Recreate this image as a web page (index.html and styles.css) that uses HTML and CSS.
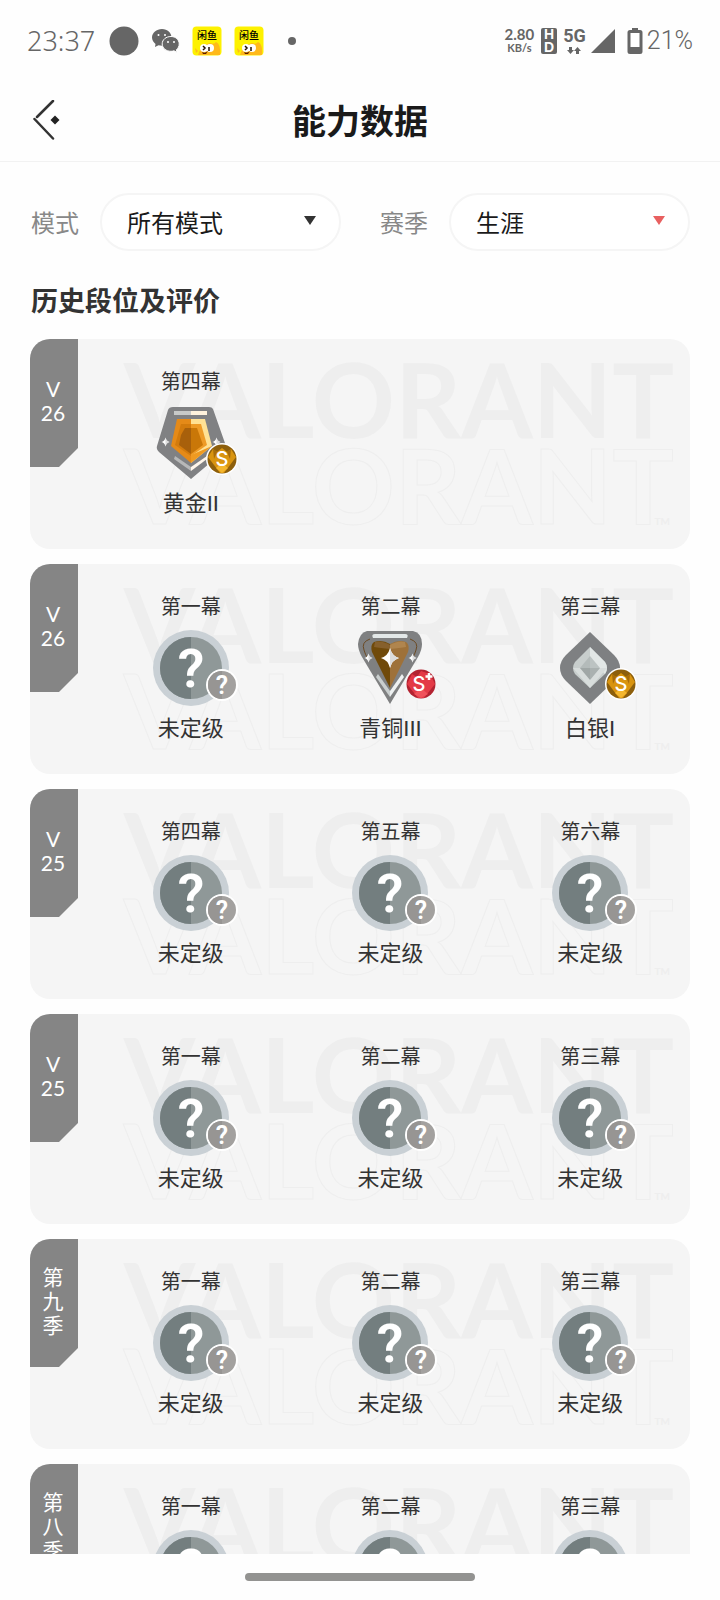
FILE: index.html
```html
<!DOCTYPE html>
<html lang="zh-CN">
<head>
  <meta charset="UTF-8" />
  <meta name="viewport" content="width=device-width, initial-scale=1" />
  <title>能力数据</title>
  <link rel="stylesheet" href="styles.css">
</head>
<body>

  <!-- iconos compartidos -->
  <svg class="defs" aria-hidden="true">
    <symbol id="unranked" viewBox="0 0 76 76" overflow="visible">
      <circle cx="38" cy="38" r="38" fill="#c9d0d5" />
      <circle cx="38" cy="38" r="31" fill="#8f9898" />
      <path d="M38 7a31 31 0 0 0 0 62z" fill="#737e7f" />
      <text class="q" x="38" y="57" font-size="54">?</text>
      <circle cx="69" cy="55" r="16" fill="#fff" />
      <circle cx="69" cy="55" r="14" fill="#a3a19f" />
      <path d="M69 41a14 14 0 0 0 0 28z" fill="#979593" />
      <text class="q" x="69" y="64" font-size="25">?</text>
    </symbol>
    <symbol id="spark" viewBox="-10 -10 20 20">
      <path d="M0-10Q2-2 9 0Q2 2 0 10Q-2 2-9 0Q-2-2 0-10z" fill="#fff" />
      <path d="M0-10Q2-2 9 0Q2 2 0 10z" fill="#dcdcdc" />
    </symbol>
    <symbol id="s-gold" viewBox="0 0 32 32">
      <circle cx="16" cy="16" r="16" fill="#fff" />
      <circle cx="16" cy="16" r="14.500" fill="#8d5f0c" />
      <path d="M2 14L7 6L11 9L16 5L21 9L25 6L30 14L18 30H14z" fill="#d9940f" />
      <path d="M7 6L11 9L8 16zM25 6L21 9L24 16z" fill="#a66c0b" />
      <path d="M16 20L22 25L16 30L10 25z" fill="#f4b62d" />
      <text class="s" x="16" y="23" font-size="20">S</text>
    </symbol>
    <symbol id="s-red" viewBox="0 0 32 32">
      <circle cx="16" cy="16" r="16" fill="#f5f5f5" />
      <circle cx="16" cy="16" r="14.500" fill="#b32331" />
      <path d="M2 16L7 6L12 9L16 3L25 6L30 16L19 30H13z" fill="#e33a46" />
      <path d="M16 20L23 26L16 30L9 26z" fill="#f0525b" />
      <text class="s" x="14" y="23" font-size="20">S</text>
      <path d="M24 5v7M20.500 8.500h7" stroke="#fff" stroke-width="2.500" />
    </symbol>
  </svg>

  <div class="statusbar">
    <span class="time">23:37</span>
    <svg class="st-circle" width="30" height="30" viewBox="0 0 30 30"><circle cx="15" cy="15" r="14.500" fill="#666" /></svg>
    <svg class="st-wechat" width="28" height="24" viewBox="0 0 28 24">
      <path d="M10 0C4.500 0 0 3.800 0 8.500c0 2.600 1.400 4.800 3.500 6.400L3 18l3.500-1.800c1 .3 2.200.5 3.500.5 5.500 0 9.500-3.500 9.500-8.200S15.500 0 10 0z" fill="#666" />
      <path d="M19 7.500c-5 0-8.800 3.200-8.800 7.400s3.800 7.400 8.800 7.400c1.100 0 2-.2 3-.5l3 1.600-.6-2.700c1.800-1.400 2.800-3.500 2.800-5.800 0-4.200-3.600-7.400-8.200-7.400z" fill="#666" stroke="#fff" />
      <g fill="#fff"><circle cx="6.500" cy="6" r="1" /><circle cx="13" cy="6" r="1" /><circle cx="16" cy="13" r="1" /><circle cx="22" cy="13" r="1" /></g>
    </svg>
    <svg class="st-fish" width="30" height="30" viewBox="0 0 30 30">
      <rect x=".5" y=".5" width="29" height="29" rx="4" fill="#fdf100" />
      <path d="M6 29Q9 19 18 17Q22 19 24 16Q29 18 28 29z" fill="#ffb91a" />
      <path d="M3 22l3 3-2 2z" fill="#ffb91a" />
      <circle cx="12" cy="22" r="4" fill="#fff" /><circle cx="18" cy="22" r="4" fill="#fff" />
      <path d="M11 20l2 2-2 2M17 21v4" fill="none" stroke="#221000" stroke-width="1.500" />
      <path d="M10 26q3 2 6-1l-2 3h-3z" fill="#5a1a00" />
      <text x="15" y="13" font-size="10">闲鱼</text>
    </svg>
    <svg class="st-fish" width="30" height="30" viewBox="0 0 30 30">
      <rect x=".5" y=".5" width="29" height="29" rx="4" fill="#fdf100" />
      <path d="M6 29Q9 19 18 17Q22 19 24 16Q29 18 28 29z" fill="#ffb91a" />
      <path d="M3 22l3 3-2 2z" fill="#ffb91a" />
      <circle cx="12" cy="22" r="4" fill="#fff" /><circle cx="18" cy="22" r="4" fill="#fff" />
      <path d="M11 20l2 2-2 2M17 21v4" fill="none" stroke="#221000" stroke-width="1.500" />
      <path d="M10 26q3 2 6-1l-2 3h-3z" fill="#5a1a00" />
      <text x="15" y="13" font-size="10">闲鱼</text>
    </svg>
    <span class="more"></span>

    <span class="speed"><b>2.80</b><small>KB/s</small></span>
    <span class="hd"><b>H</b><b>D</b></span>
    <span class="net">
      <b>5G</b>
      <svg width="14" height="8" viewBox="0 0 14 8"><path d="M2 0h3v3h2L3.500 7L0 3h2zM9 7h3V4h2L10.500 0L7 4h2z" fill="#666" /></svg>
    </span>
    <svg class="st-signal" width="24" height="24" viewBox="0 0 24 24"><path d="M0 24L24 0V24z" fill="#666" /></svg>
    <svg class="st-battery" width="16" height="26" viewBox="0 0 16 26">
      <path d="M5 0h6v3H5z" fill="#666" />
      <rect x="2" y="3.500" width="12" height="21" rx="1" fill="#fff" stroke="#666" stroke-width="3" />
      <path d="M1 19h14v6H1z" fill="#666" />
    </svg>
    <span class="percent">21%</span>
  </div>

  <header class="header">
    <button class="back" type="button" aria-label="返回">
      <svg width="28" height="42" viewBox="0 0 28 42">
        <path d="M21 1L5 17M2.500 19L21 38.500" fill="none" stroke="#333" stroke-width="2.500" stroke-linecap="round" />
        <path d="M23 15.500l4.500 4.500l-4.500 4.500l-4.500-4.500z" fill="#222" />
      </svg>
    </button>
    <h1>能力数据</h1>
  </header>

  <main class="content">
    <form class="filters">
      <label for="modo">模式</label>
      <div class="select">
        <select id="modo"><option>所有模式</option></select>
      </div>
      <label for="temporada">赛季</label>
      <div class="select rojo">
        <select id="temporada"><option>生涯</option></select>
      </div>
    </form>

    <h2>历史段位及评价</h2>

    <section class="card">
      <div class="marca" aria-hidden="true"><span>VALORANT</span><span class="linea">VALORANT</span><i>TM</i></div>
      <div class="tag">V<br>26</div>
      <div class="act">
        <h3>第四幕</h3>
        <!-- oro -->
        <svg class="rank" width="76" height="76" viewBox="0 0 76 76">
          <path d="M20 2H56Q59 2 60 4L73 41Q73 44 70 47L38 74L6 47Q3 44 4 41L15 5Q16 2 20 2z" fill="#808183" />
          <path d="M21 6H38V10H21z" fill="#c7c9c8" /><path d="M38 6H54V10H38z" fill="#fff2dc" />
          <path d="M24 14H38V58L18 41z" fill="#e58a18" /><path d="M38 14H52L59 41L38 58z" fill="#ffe194" />
          <path d="M38 50L59 41L38 58z" fill="#ef9a20" />
          <path d="M28 19H38V51L22 40z" fill="#d37b0d" /><path d="M38 19H48L54 40L38 51z" fill="#ee9b27" />
          <path d="M32 23H38V49L26 40L28 30z" fill="#a8600b" /><path d="M38 23H44L50 40L38 49z" fill="#c97708" />
          <path d="M22 51L38 62V66L21 54z" fill="#b7b8b8" /><path d="M38 62L54 51V54L38 66z" fill="#fff6ea" />
          <use href="#spark" x="8" y="31" width="9" height="12" />
          <use href="#spark" x="59" y="31" width="9" height="12" />
          <use href="#s-gold" x="53" y="38" width="32" height="32" />
        </svg>
        <p>黄金II</p>
      </div>
    </section>

    <section class="card">
      <div class="marca" aria-hidden="true"><span>VALORANT</span><span class="linea">VALORANT</span><i>TM</i></div>
      <div class="tag">V<br>26</div>
      <div class="act">
        <h3>第一幕</h3>
        <svg class="rank" width="76" height="76"><use href="#unranked" width="76" height="76" /></svg>
        <p>未定级</p>
      </div>
      <div class="act">
        <h3>第二幕</h3>
        <!-- bronce -->
        <svg class="rank" width="76" height="76" viewBox="0 0 76 76">
          <path d="M15 1H61Q70 3 70 14Q70 20 66 27L38 74L10 27Q6 20 6 14Q7 3 15 1z" fill="#7f8081" />
          <path d="M18 9Q9 12 12 20Q13 24 16 29M58 9Q67 12 64 20Q63 24 60 29" fill="none" stroke="#6b4a24" />
          <path d="M23 4H53Q57 4 55 8H21Q19 4 23 4z" fill="#e3e8e8" />
          <path d="M38 14Q30 9 22 12Q18 15 20 22L38 58z" fill="#704a0a" />
          <path d="M38 14Q46 9 54 12Q58 15 56 22L38 58z" fill="#9e7139" />
          <path d="M23 12Q30 10 38 15V19Q28 18 22 17z" fill="#86602c" />
          <path d="M53 12Q46 10 38 15V19Q48 18 54 17z" fill="#b0854e" />
          <path d="M26 44L38 61V67L24 47z" fill="#c9cece" /><path d="M50 44L38 61V67L52 47z" fill="#eef1f1" />
          <use href="#spark" x="28" y="18" width="20" height="20" />
          <use href="#spark" x="12" y="22" width="9" height="12" />
          <use href="#spark" x="56" y="22" width="9" height="12" />
          <use href="#s-red" x="53" y="38" width="32" height="32" />
        </svg>
        <p>青铜III</p>
      </div>
      <div class="act">
        <h3>第三幕</h3>
        <!-- plata -->
        <svg class="rank" width="76" height="76" viewBox="0 0 76 76">
          <path d="M38 2L62 25Q68 31 68 38Q68 45 62 51L38 74L14 51Q8 45 8 38Q8 31 14 25z" fill="#7e8082" />
          <path d="M38 17L53 32Q57 38 53 44L38 58L23 44Q19 38 23 32z" fill="#c8cecd" />
          <path d="M38 17L53 32Q57 38 53 44L47 38L38 28z" fill="#e2e7e6" />
          <path d="M21 38L38 58L55 38L48 38L38 49L28 38z" fill="#d8dddc" />
          <path d="M38 26L48 38H38z" fill="#bcc3c2" /><path d="M38 26V38H28z" fill="#b4bbba" />
          <path d="M28 38H38V50z" fill="#a0a7a6" /><path d="M38 38H48L38 50z" fill="#aab1b0" />
          <use href="#s-gold" x="53" y="38" width="32" height="32" />
        </svg>
        <p>白银I</p>
      </div>
    </section>

    <section class="card">
      <div class="marca" aria-hidden="true"><span>VALORANT</span><span class="linea">VALORANT</span><i>TM</i></div>
      <div class="tag">V<br>25</div>
      <div class="act">
        <h3>第四幕</h3>
        <svg class="rank" width="76" height="76"><use href="#unranked" width="76" height="76" /></svg>
        <p>未定级</p>
      </div>
      <div class="act">
        <h3>第五幕</h3>
        <svg class="rank" width="76" height="76"><use href="#unranked" width="76" height="76" /></svg>
        <p>未定级</p>
      </div>
      <div class="act">
        <h3>第六幕</h3>
        <svg class="rank" width="76" height="76"><use href="#unranked" width="76" height="76" /></svg>
        <p>未定级</p>
      </div>
    </section>

    <section class="card">
      <div class="marca" aria-hidden="true"><span>VALORANT</span><span class="linea">VALORANT</span><i>TM</i></div>
      <div class="tag">V<br>25</div>
      <div class="act">
        <h3>第一幕</h3>
        <svg class="rank" width="76" height="76"><use href="#unranked" width="76" height="76" /></svg>
        <p>未定级</p>
      </div>
      <div class="act">
        <h3>第二幕</h3>
        <svg class="rank" width="76" height="76"><use href="#unranked" width="76" height="76" /></svg>
        <p>未定级</p>
      </div>
      <div class="act">
        <h3>第三幕</h3>
        <svg class="rank" width="76" height="76"><use href="#unranked" width="76" height="76" /></svg>
        <p>未定级</p>
      </div>
    </section>

    <section class="card">
      <div class="marca" aria-hidden="true"><span>VALORANT</span><span class="linea">VALORANT</span><i>TM</i></div>
      <div class="tag">第<br>九<br>季</div>
      <div class="act">
        <h3>第一幕</h3>
        <svg class="rank" width="76" height="76"><use href="#unranked" width="76" height="76" /></svg>
        <p>未定级</p>
      </div>
      <div class="act">
        <h3>第二幕</h3>
        <svg class="rank" width="76" height="76"><use href="#unranked" width="76" height="76" /></svg>
        <p>未定级</p>
      </div>
      <div class="act">
        <h3>第三幕</h3>
        <svg class="rank" width="76" height="76"><use href="#unranked" width="76" height="76" /></svg>
        <p>未定级</p>
      </div>
    </section>

    <section class="card">
      <div class="marca" aria-hidden="true"><span>VALORANT</span><span class="linea">VALORANT</span><i>TM</i></div>
      <div class="tag">第<br>八<br>季</div>
      <div class="act">
        <h3>第一幕</h3>
        <svg class="rank" width="76" height="76"><use href="#unranked" width="76" height="76" /></svg>
        <p>未定级</p>
      </div>
      <div class="act">
        <h3>第二幕</h3>
        <svg class="rank" width="76" height="76"><use href="#unranked" width="76" height="76" /></svg>
        <p>未定级</p>
      </div>
      <div class="act">
        <h3>第三幕</h3>
        <svg class="rank" width="76" height="76"><use href="#unranked" width="76" height="76" /></svg>
        <p>未定级</p>
      </div>
    </section>
  </main>

  <div class="home"><span></span></div>

</body>
</html>
```
FILE: styles.css
```css
* {
  box-sizing: border-box;
}

body {
  margin: 0;
  height: 100vh;
  overflow: hidden;
  display: flex;
  flex-direction: column;
  background: #fefefe;
  color: #333;
  font-family: Lato, 'Noto Sans CJK SC', sans-serif;
}

h1, h2, h3, p {
  margin: 0;
}

.defs {
  position: absolute;
  width: 0;
  height: 0;
}

/* barra de estado */
.statusbar {
  flex: none;
  display: flex;
  align-items: center;
  height: 82px;
  padding: 0 27px;
  color: #666;
}

.time {
  font: 300 27px/28px 'Noto Sans', sans-serif;
}

.st-circle {
  margin-left: 14px;
}

.st-wechat {
  margin-left: 13px;
}

.st-fish {
  margin-left: 12px;
}

.st-fish text {
  font-family: 'Noto Sans CJK SC', sans-serif;
  font-weight: 500;
  text-anchor: middle;
}

.more {
  width: 8px;
  height: 8px;
  margin-left: 24px;
  margin-right: auto;
  border-radius: 50%;
  background: #666;
}

.speed {
  display: flex;
  flex-direction: column;
  align-items: center;
  font-size: 15px;
  line-height: 14px;
}

.speed small {
  font-size: 11px;
  font-weight: 700;
}

.hd {
  display: flex;
  flex-direction: column;
  align-items: center;
  width: 16px;
  height: 26px;
  margin-left: 7px;
  border-radius: 2px;
  background: #666;
  color: #fff;
  font: 700 14px/13px 'Liberation Sans', sans-serif;
}

.net {
  display: flex;
  flex-direction: column;
  align-items: center;
  gap: 3px;
  margin-left: 6px;
  font: 500 18px/16px Roboto, sans-serif;
}

.st-signal {
  margin-left: 5px;
}

.st-battery {
  margin-left: 12px;
}

.percent {
  margin-left: 4px;
  font: 300 25px/28px Roboto, sans-serif;
}

/* cabecera */
.header {
  flex: none;
  display: grid;
  grid-template-columns: 60px 1fr 60px;
  align-items: center;
  height: 80px;
  padding: 0 32px 1px;
  border-bottom: 1px solid #f2f2f2;
}

.back {
  width: 28px;
  height: 42px;
  padding: 0;
  border: none;
  background: none;
  cursor: pointer;
}

.back svg {
  display: block;
}

.header h1 {
  color: #1a1a1a;
  font-size: 34px;
  line-height: 40px;
  text-align: center;
}

/* contenido */
.content {
  flex: 1;
  min-height: 0;
  overflow: hidden;
  padding: 31px 30px 0;
}

.filters {
  display: flex;
  align-items: center;
}

.filters label {
  margin-right: 21px;
  padding: 0 0 2px 1px;
  color: #888;
  font-size: 24px;
  white-space: nowrap;
}

.select {
  position: relative;
  flex: 1;
}

.select + label {
  margin-left: 38px;
}

.select::after {
  content: "";
  position: absolute;
  top: 23px;
  right: 25px;
  border: 6px solid transparent;
  border-top: 9px solid #333;
  border-bottom: 0;
  pointer-events: none;
}

.select.rojo::after {
  border-top-color: #e86060;
}

.select select {
  display: block;
  width: 100%;
  height: 58px;
  padding: 0 25px;
  border: 2px solid #f5f5f5;
  border-radius: 29px;
  appearance: none;
  background: #fff;
  color: #1a1a1a;
  font-family: inherit;
  font-size: 24px;
}

.content h2 {
  margin: 30px 0 18px;
  padding-left: 1px;
  font-size: 27px;
  line-height: 40px;
}

/* tarjetas */
.card {
  position: relative;
  display: grid;
  grid-template-columns: repeat(3, 1fr);
  height: 210px;
  margin-bottom: 15px;
  padding: 28px 0 0 61px;
  border-radius: 20px;
  background: #f5f5f5;
  overflow: hidden;
}

.tag {
  position: absolute;
  top: 0;
  left: 0;
  display: flex;
  align-items: center;
  justify-content: center;
  width: 48px;
  height: 128px;
  padding: 0 2px 4px 0;
  background: #858585;
  clip-path: polygon(0 0, 100% 0, 100% 109px, 29px 100%, 0 100%);
  color: #fff;
  font-size: 21px;
  line-height: 24px;
  text-align: center;
}

.marca {
  position: absolute;
  top: 16px;
  right: 16px;
  color: #eee;
  font-size: 103px;
  font-weight: 700;
  line-height: 86px;
}

.marca span {
  display: block;
}

.marca .linea {
  color: #f5f5f5;
  -webkit-text-stroke: 1px #eee;
}

.marca i {
  position: absolute;
  right: 4px;
  bottom: 0;
  font-size: 10px;
  font-style: normal;
  line-height: 12px;
}

.act {
  position: relative;
  display: flex;
  flex-direction: column;
  align-items: center;
}

.act h3 {
  font-size: 20px;
  font-weight: 400;
  line-height: 28px;
}

.rank {
  display: block;
  margin: 10px 0 7px;
  overflow: visible;
}

.act p {
  font-size: 22px;
  line-height: 30px;
}

.q, .s {
  fill: #fff;
  font-family: Roboto, sans-serif;
  font-weight: 600;
  text-anchor: middle;
}

.s {
  font-family: Inter, sans-serif;
  font-weight: 500;
}

/* barra inferior */
.home {
  flex: none;
  display: flex;
  justify-content: center;
  height: 46px;
  padding-top: 19px;
}

.home span {
  width: 32%;
  height: 8px;
  border-radius: 4px;
  background: #939391;
}
```
